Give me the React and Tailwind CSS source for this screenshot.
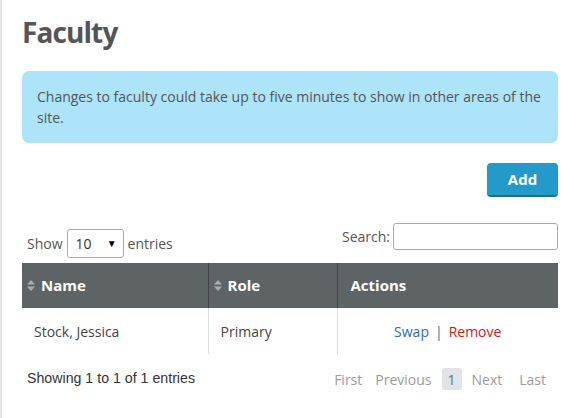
import React from "react";

function SortIcon() {
  return (
    <svg width="8" height="11" viewBox="0 0 8 11" className="mr-[5px] shrink-0">
      <path d="M4 0 L8 4.5 L0 4.5 Z" fill="#a9adae" />
      <path d="M4 11 L8 6.5 L0 6.5 Z" fill="#a9adae" />
    </svg>
  );
}

export default function App() {
  return (
    <div className="min-h-[418px] w-[566px] bg-white border-l-2 border-[#e4e4e4] text-[#555]" style={{ fontFamily: '"Open Sans", sans-serif' }}>
      <div className="pl-[20px] pr-[8px] pt-[12px]">
        <h1 className="text-[28px] font-bold leading-[40px] text-[#555] tracking-[-0.9px]">Faculty</h1>
        <div className="mt-[19px] rounded-[7px] bg-[#ade4f9] px-[15px] py-[15px] text-[14px] leading-[21px] text-[#555]">
          Changes to faculty could take up to five minutes to show in other areas of the site.
        </div>
        <div className="mt-[20px] flex justify-end">
          <button className="h-[34px] w-[71px] rounded-[4px] bg-[#229bcb] border-b-2 border-[#186f94] text-[15px] font-bold text-white">Add</button>
        </div>
        <div className="mt-[26px] flex items-end justify-between">
          <div className="flex items-center pl-[5px] text-[14px] mb-[5px]">
            <span>Show</span>
            <div className="mx-[4px] flex h-[29px] w-[57px] items-center justify-between rounded-[3px] border border-[#aaa] pl-[8px] pr-[6px]">
              <span className="text-[#333]">10</span>
              <span className="text-[10px] text-black">▼</span>
            </div>
            <span>entries</span>
          </div>
          <div className="flex items-center text-[14px] mb-[13px]">
            <span className="mr-[3px]">Search:</span>
            <div className="h-[27px] w-[165px] rounded-[3px] border border-[#aaa]" />
          </div>
        </div>
        <table className="w-[536px] border-collapse text-[14px]">
          <thead>
            <tr className="h-[45px] bg-[#5e6466] text-white">
              <th className="w-[186px] border-r border-[#444] px-[5px] text-left font-bold text-[15px]">
                <div className="flex items-center"><SortIcon /><span className="ml-[1px]">Name</span></div>
              </th>
              <th className="w-[129px] border-r border-[#444] px-[5px] text-left font-bold text-[15px]">
                <div className="flex items-center"><SortIcon /><span className="ml-[1px]">Role</span></div>
              </th>
              <th className="px-[13px] text-left font-bold text-[15px]">Actions</th>
            </tr>
          </thead>
          <tbody>
            <tr className="h-[46px]">
              <td className="border-r border-[#ddd] px-[12px] text-[#444]">Stock, Jessica</td>
              <td className="border-r border-[#ddd] px-[12px] text-[#444]">Primary</td>
              <td className="text-center">
                <span className="text-[#2b6cb0]">Swap</span>
                <span className="mx-[6px] text-[#2b6cb0]">|</span>
                <span className="text-[#d41616]">Remove</span>
              </td>
            </tr>
          </tbody>
        </table>
        <div className="mt-[14px] flex items-center justify-between">
          <span className="pl-[5px] text-[14.2px] text-[#333]" style={{ fontFamily: '"Liberation Sans", Arial, sans-serif' }}>
            Showing 1 to 1 of 1 entries
          </span>
          <div className="flex items-center text-[14px] text-[#9b9b9b]">
            <span className="pl-[10px] pr-[13px]">First</span>
            <span className="pr-[10px]">Previous</span>
            <span className="flex h-[22px] w-[20px] items-center justify-center rounded-[3px] bg-[#e0e4e6] text-[#6a6f8a]">1</span>
            <span className="px-[10px]">Next</span>
            <span className="pl-[7px] pr-[12px]">Last</span>
          </div>
        </div>
      </div>
    </div>
  );
}
